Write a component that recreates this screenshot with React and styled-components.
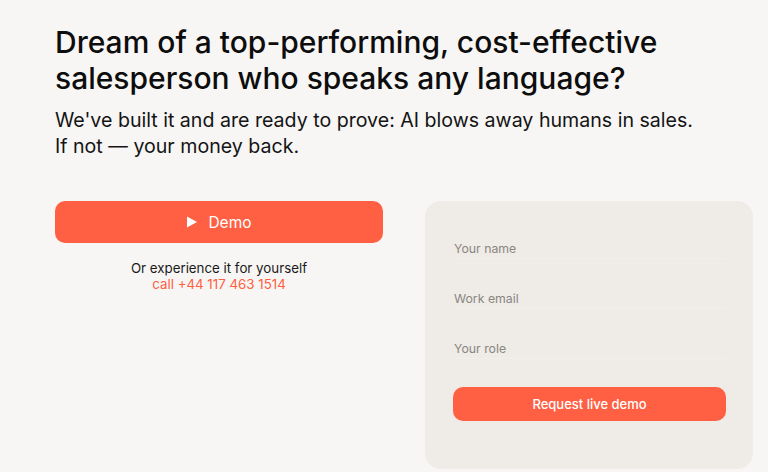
import React from "react";
import styled, { createGlobalStyle } from "styled-components";

const Global = createGlobalStyle`
  html, body {
    margin: 0;
    padding: 0;
    background: #f7f6f4;
  }
  body {
    font-family: Inter, "Noto Sans", sans-serif;
    color: #111111;
  }
`;

export default function App() {
  return (
    <Page>
      <Global />
      <Title>
        Dream of a top-performing, cost-effective
        <br />
        salesperson who speaks any language?
      </Title>
      <Lead>
        We've built it and are ready to prove: AI blows away humans in sales.
        <br />
        If not — your money back.
      </Lead>
      <Columns>
        <LeftCol>
          <PrimaryButton $height={42} $size={15.5} $weight={400} $gap={10}>
            <svg width="12" height="12" viewBox="0 0 12 12">
              <path d="M1 0.5 L11 6 L1 11.5 Z" fill="#ffffff" />
            </svg>
            Demo
          </PrimaryButton>
          <Note>
            Or experience it for yourself
            <CallLink href="#">call +44 117 463 1514</CallLink>
          </Note>
        </LeftCol>
        <FormCard>
          <Field placeholder="Your name" />
          <Field placeholder="Work email" />
          <Field placeholder="Your role" />
          <PrimaryButton $height={34} $size={13} $weight={500} $top={28}>
            Request live demo
          </PrimaryButton>
        </FormCard>
      </Columns>
    </Page>
  );
}

const Page = styled.div`
  padding: 24px 15px 0 55px;
  height: 472px;
  box-sizing: border-box;
  overflow: hidden;
`;

const Title = styled.h1`
  margin: 0;
  font-size: 30px;
  line-height: 36px;
  font-weight: 500;
  color: #0d0d0d;
`;

const Lead = styled.p`
  margin: 11px 0 0;
  font-size: 19.6px;
  line-height: 26px;
  font-weight: 400;
  color: #141414;
`;

const Columns = styled.div`
  display: grid;
  grid-template-columns: 328px 328px;
  column-gap: 42px;
  margin-top: 42px;
  align-items: start;
`;

const LeftCol = styled.div`
  display: flex;
  flex-direction: column;
  align-items: center;
`;

const PrimaryButton = styled.button`
  width: 100%;
  flex-shrink: 0;
  height: ${(p) => p.$height}px;
  margin-top: ${(p) => p.$top || 0}px;
  display: flex;
  align-items: center;
  justify-content: center;
  gap: ${(p) => p.$gap || 0}px;
  border: none;
  border-radius: 10px;
  background: #ff5f42;
  color: #ffffff;
  font-family: Inter, "Noto Sans", sans-serif;
  font-size: ${(p) => p.$size}px;
  font-weight: ${(p) => p.$weight};
  cursor: pointer;
`;

const Note = styled.div`
  margin-top: 17px;
  display: flex;
  flex-direction: column;
  align-items: center;
  font-size: 13.3px;
  line-height: 16px;
  color: #1a1a1a;
`;

const CallLink = styled.a`
  color: #ff5f42;
  text-decoration: none;
`;

const FormCard = styled.form`
  display: flex;
  flex-direction: column;
  background: #efebe6;
  border-radius: 16px;
  padding: 39px 27px 48px 28px;
`;

const Field = styled.input`
  display: block;
  width: 100%;
  box-sizing: border-box;
  height: 19px;
  padding: 0 0 2px 1px;
  border: none;
  border-bottom: 1px solid #f2efeb;
  background: transparent;
  font-family: Inter, "Noto Sans", sans-serif;
  font-size: 12.3px;
  line-height: 16px;
  color: #222;
  outline: none;
  & + & {
    margin-top: 31px;
  }
  &::placeholder {
    color: #8a8682;
  }
`;
